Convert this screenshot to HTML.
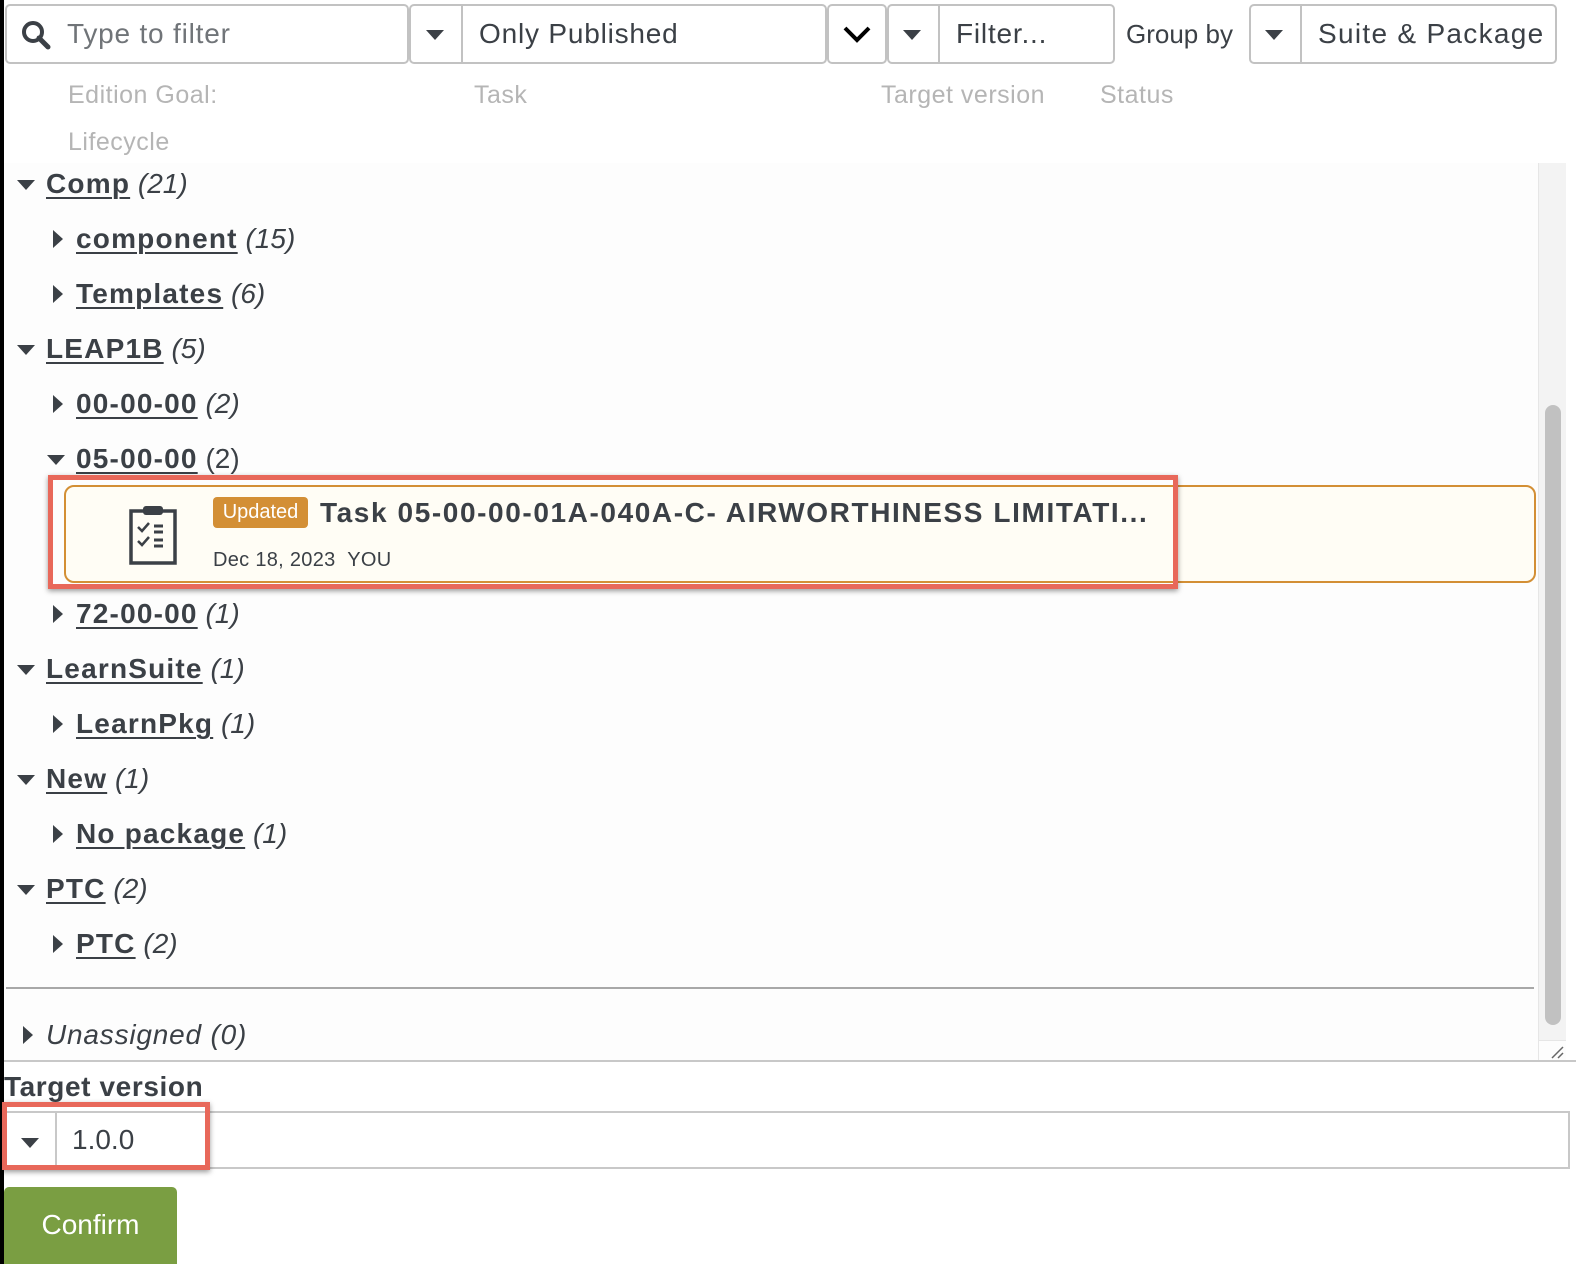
<!DOCTYPE html>
<html><head><style>
*{box-sizing:border-box;margin:0;padding:0}
body{width:1576px;height:1264px;position:relative;overflow:hidden;background:#fff;font-family:"Liberation Sans",sans-serif;color:#3b4046}
.a{position:absolute}
.box{position:absolute;border:2px solid #c2c2c2;border-radius:5px;background:#fff}
.r{position:absolute;width:0;height:0;border-top:9px solid transparent;border-bottom:9px solid transparent;border-left:10px solid #3b4046}
.d{position:absolute;width:0;height:0;border-left:9px solid transparent;border-right:9px solid transparent;border-top:10px solid #3b4046}
.t{position:absolute;font-size:28px;line-height:34px;white-space:nowrap}
.t b{text-decoration:underline;text-decoration-thickness:2px;text-underline-offset:4px;letter-spacing:1.2px}
.t i{font-weight:normal}
.g{position:absolute;font-size:25px;color:#b5b5b5;letter-spacing:.5px}
.f{letter-spacing:.8px}
</style></head><body>
<div class="a" style="left:0;top:0;width:4px;height:1264px;background:#000"></div>

<div class="box" style="left:5px;top:4px;width:404px;height:60px"></div>
<svg class="a" style="left:20px;top:19px" width="32" height="32" viewBox="0 0 32 32"><circle cx="13" cy="13" r="9" fill="none" stroke="#3b4046" stroke-width="4"/><path d="M19 19 L28 28" stroke="#3b4046" stroke-width="5" stroke-linecap="round"/></svg>
<div class="a f" style="left:67px;top:18px;font-size:28px;color:#707478">Type to filter</div>

<div class="box" style="left:409px;top:4px;width:418px;height:60px"></div>
<div class="a" style="left:461px;top:6px;width:2px;height:56px;background:#c2c2c2"></div>
<div class="d" style="left:426px;top:30px"></div>
<div class="a f" style="left:479px;top:18px;font-size:28px">Only Published</div>
<div class="box" style="left:827px;top:4px;width:60px;height:60px"></div>
<svg class="a" style="left:842px;top:24px" width="30" height="20"><path d="M3 4 L15 16 L27 4" fill="none" stroke="#000" stroke-width="4"/></svg>

<div class="box" style="left:887px;top:4px;width:228px;height:60px"></div>
<div class="a" style="left:938px;top:6px;width:2px;height:56px;background:#c2c2c2"></div>
<div class="d" style="left:903px;top:30px"></div>
<div class="a f" style="left:956px;top:18px;font-size:28px">Filter...</div>

<div class="a" style="left:1126px;top:19px;font-size:26px">Group by</div>
<div class="box" style="left:1249px;top:4px;width:308px;height:60px"></div>
<div class="a" style="left:1300px;top:6px;width:2px;height:56px;background:#c2c2c2"></div>
<div class="d" style="left:1265px;top:30px"></div>
<div class="a" style="left:1318px;top:18px;font-size:28px;letter-spacing:1.3px;white-space:nowrap;width:236px;overflow:hidden">Suite &amp; Package</div>

<div class="g" style="left:68px;top:81px">Edition Goal:</div>
<div class="g" style="left:474px;top:81px">Task</div>
<div class="g" style="left:881px;top:81px">Target version</div>
<div class="g" style="left:1100px;top:81px">Status</div>
<div class="g" style="left:68px;top:128px">Lifecycle</div>

<div class="a" style="left:4px;top:163px;width:1562px;height:898px;background:#fdfdfd"></div>
<div class="a" style="left:1538px;top:163px;width:28px;height:877px;background:#f3f3f3;border-left:1px solid #e6e6e6"></div>
<div class="a" style="left:1545px;top:405px;width:16px;height:620px;background:#c1c1c1;border-radius:8px"></div>
<div class="a" style="left:1538px;top:1040px;width:28px;height:20px;border-left:1px solid #e6e6e6;border-top:1px solid #e6e6e6"></div>
<svg class="a" style="left:1548px;top:1044px" width="18" height="16"><path d="M4 14 L15 3 M10 14 L15 9" stroke="#666" stroke-width="1.5"/></svg>
<div class="a" style="left:4px;top:1060px;width:1572px;height:2px;background:#c8c8c8"></div>

<div class="d" style="left:17px;top:180px"></div><div class="t" style="left:46px;top:167px"><b>Comp</b> <i>(21)</i></div>
<div class="r" style="left:53px;top:230px"></div><div class="t" style="left:76px;top:222px"><b>component</b> <i>(15)</i></div>
<div class="r" style="left:53px;top:285px"></div><div class="t" style="left:76px;top:277px"><b>Templates</b> <i>(6)</i></div>
<div class="d" style="left:17px;top:345px"></div><div class="t" style="left:46px;top:332px"><b>LEAP1B</b> <i>(5)</i></div>
<div class="r" style="left:53px;top:395px"></div><div class="t" style="left:76px;top:387px"><b>00-00-00</b> <i>(2)</i></div>
<div class="d" style="left:47px;top:455px"></div><div class="t" style="left:76px;top:442px"><b>05-00-00</b> (2)</div>

<div class="a" style="left:64px;top:485px;width:1472px;height:98px;background:#fffdf5;border:2px solid #d38f35;border-radius:10px"></div>
<div class="a" style="left:48px;top:475px;width:1130px;height:114px;border:5px solid #e8685a;box-shadow:0 2px 5px rgba(0,0,0,.4)"></div>
<svg class="a" style="left:128px;top:505px" width="50" height="60" viewBox="0 0 50 60"><rect x="3" y="6" width="44" height="52" fill="none" stroke="#3b4046" stroke-width="3.5"/><rect x="15" y="1" width="20" height="9" rx="3" fill="#3b4046"/><path d="M10 22 L14 26 L21 18 M10 36 L14 40 L21 32" fill="none" stroke="#3b4046" stroke-width="2.5"/><path d="M26 21h9M26 27h9M26 35h9M26 41h9" stroke="#3b4046" stroke-width="3"/></svg>
<div class="a" style="left:213px;top:497px;width:95px;height:31px;background:#d38f35;border-radius:4px;color:#fff;font-size:20px;line-height:31px;text-align:center">Updated</div>
<div class="a" style="left:320px;top:497px;font-size:28px;font-weight:bold;letter-spacing:1.6px;white-space:nowrap">Task 05-00-00-01A-040A-C- AIRWORTHINESS LIMITATI...</div>
<div class="a" style="left:213px;top:549px;font-size:20px;letter-spacing:.3px">Dec 18, 2023&nbsp;&nbsp;YOU</div>

<div class="r" style="left:53px;top:605px"></div><div class="t" style="left:76px;top:597px"><b>72-00-00</b> <i>(1)</i></div>
<div class="d" style="left:17px;top:665px"></div><div class="t" style="left:46px;top:652px"><b>LearnSuite</b> <i>(1)</i></div>
<div class="r" style="left:53px;top:715px"></div><div class="t" style="left:76px;top:707px"><b>LearnPkg</b> <i>(1)</i></div>
<div class="d" style="left:17px;top:775px"></div><div class="t" style="left:46px;top:762px"><b>New</b> <i>(1)</i></div>
<div class="r" style="left:53px;top:825px"></div><div class="t" style="left:76px;top:817px"><b>No package</b> <i>(1)</i></div>
<div class="d" style="left:17px;top:885px"></div><div class="t" style="left:46px;top:872px"><b>PTC</b> <i>(2)</i></div>
<div class="r" style="left:53px;top:935px"></div><div class="t" style="left:76px;top:927px"><b>PTC</b> <i>(2)</i></div>

<div class="a" style="left:6px;top:987px;width:1528px;height:2px;background:#a8a8a8"></div>
<div class="r" style="left:23px;top:1026px"></div><div class="t" style="left:46px;top:1018px;letter-spacing:.8px"><i>Unassigned (0)</i></div>

<div class="a" style="left:4px;top:1071px;font-size:28px;font-weight:bold;letter-spacing:.6px">Target version</div>
<div class="a" style="left:4px;top:1111px;width:1566px;height:58px;border:2px solid #c8c8c8;border-left:none;background:#fff"></div>
<div class="a" style="left:55px;top:1113px;width:2px;height:54px;background:#c8c8c8"></div>
<div class="d" style="left:21px;top:1138px"></div>
<div class="a" style="left:72px;top:1124px;font-size:28px">1.0.0</div>
<div class="a" style="left:2px;top:1102px;width:208px;height:68px;border:5px solid #e8685a;box-shadow:0 2px 5px rgba(0,0,0,.4)"></div>

<div class="a" style="left:4px;top:1187px;width:173px;height:77px;background:#7a9e42;border-radius:5px 5px 0 0;color:#fff;font-size:28px;line-height:76px;text-align:center">Confirm</div>
</body></html>
